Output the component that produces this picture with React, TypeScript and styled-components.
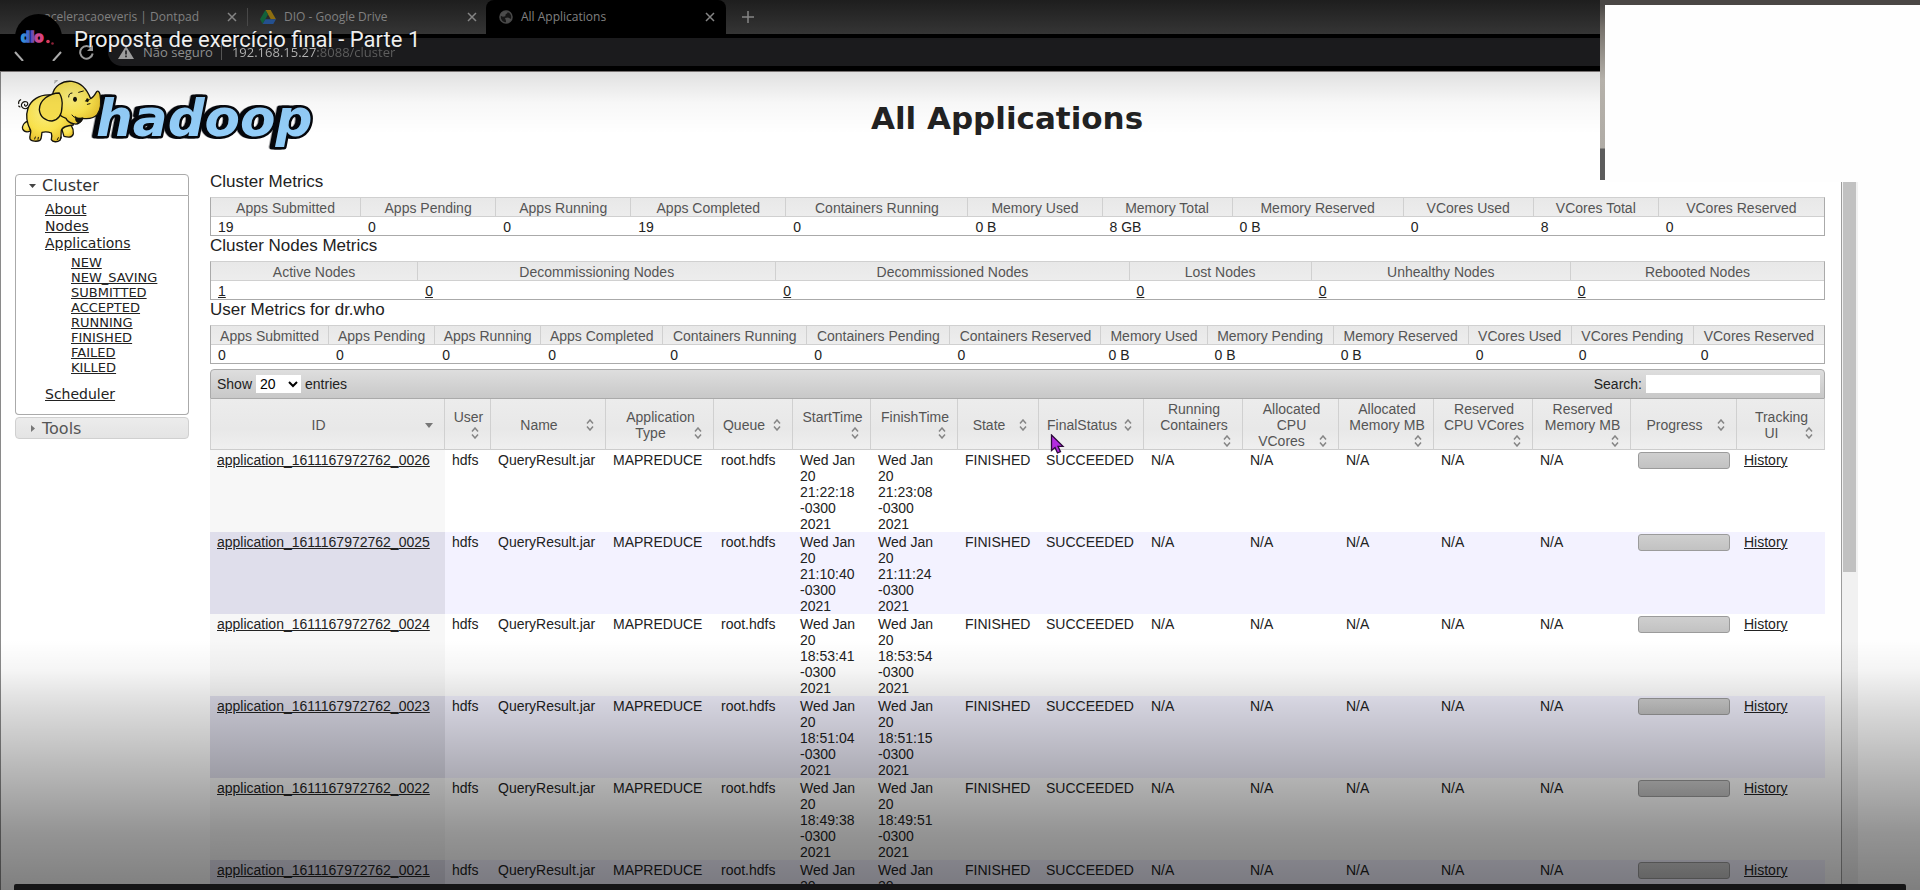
import React from "react";
import styled, { createGlobalStyle } from "styled-components";

const sans = `"Liberation Sans", Arial, sans-serif`;
const wide = `"DejaVu Sans", Verdana, sans-serif`;
const chrome = `"Open Sans", "Segoe UI", sans-serif`;

const GlobalStyle = createGlobalStyle`
  *, *::before, *::after { box-sizing: border-box; }
  body { margin: 0; background: #fff; font-family: ${sans}; color: #222; }
  button, input, select { font: inherit; color: inherit; margin: 0; padding: 0; }
  button { background: none; border: 0; }
  a { color: inherit; }
`;

/* ---------- player ---------- */

const Player = styled.div`
  position: relative;
  display: flex;
  flex-direction: column;
  height: 100vh;
  overflow: hidden;
`;

const TopShade = styled.div`
  position: absolute;
  top: 72px;
  left: 0;
  right: 0;
  height: 62px;
  background: linear-gradient(rgba(0, 0, 0, 0.12), rgba(0, 0, 0, 0.03) 50%, transparent);
  pointer-events: none;
`;

const BottomShade = styled.div`
  position: absolute;
  bottom: 0;
  left: 0;
  right: 0;
  height: 250px;
  background: linear-gradient(
    transparent,
    rgba(0, 0, 0, 0.04) 12%,
    rgba(0, 0, 0, 0.14) 27%,
    rgba(0, 0, 0, 0.27) 50%,
    rgba(0, 0, 0, 0.42) 77%,
    rgba(0, 0, 0, 0.5)
  );
  pointer-events: none;
`;

const SeekEdge = styled.div`
  position: absolute;
  bottom: 0;
  left: 14px;
  right: 14px;
  height: 6px;
  border-radius: 2px 2px 0 0;
  background: #151516;
`;

const VideoHeading = styled.div`
  position: absolute;
  top: 14px;
  left: 15px;
  display: flex;
  align-items: center;
  gap: 12px;
`;

const Avatar = styled.a`
  display: block;
  width: 47px;
  height: 47px;
  border-radius: 50%;
  background: #000;
  overflow: hidden;
`;

const VideoTitle = styled.h2`
  margin: 0;
  padding-top: 4px;
  font: 400 22px/28px Roboto, sans-serif;
  color: #eee;
  text-shadow: 0 0 2px rgba(0, 0, 0, 0.6);
`;

const Webcam = styled.div`
  position: absolute;
  top: 0;
  right: 0;
  width: 320px;
  height: 182px;
  padding: 5px 0 0 5px;
  background: linear-gradient(#4a4745, #4a4745 5px, #77726c 28px, #b5b1aa 80px, #b0aca6 148px, #5c5c5c 149px, #5c5c5c 180px, #fff 180px);
`;

const WebcamFrame = styled.div`
  height: 100%;
  background: #fefefe;
`;

const Pointer = styled.svg`
  position: absolute;
  top: 434px;
  left: 1050px;
`;

/* ---------- browser ---------- */

const TabStrip = styled.nav`
  display: flex;
  height: 34px;
  background: linear-gradient(#1e1e1e, #353535);
  font: 12px/16px ${chrome};
  color: #808080;
`;

const Tab = styled.div<{ $active?: boolean }>`
  display: flex;
  align-items: center;
  gap: 8px;
  width: 238px;
  margin: 8px 0;
  padding: 0 9px 0 12px;
  ${(p) =>
    p.$active &&
    `
    width: 240px;
    margin: 0;
    padding: 0 11px 0 13px;
    border-radius: 8px 8px 0 0;
    background: #000;
  `}
`;

const TabStart = styled(Tab)`
  width: 248px;
  padding: 0 10px 0 44px;
  border-right: 1px solid #484848;
`;

const TabLabel = styled.button`
  flex: 1;
  text-align: left;
  white-space: nowrap;
`;

const TabIconButton = styled.button`
  display: flex;
`;

const NewTab = styled.button`
  display: flex;
  align-items: center;
  padding: 0 16px;
`;

const AddressRow = styled.div`
  display: flex;
  gap: 14px;
  height: 38px;
  padding: 4px 0 5px 13px;
  background: #000;
  border-bottom: 1px solid #777272;
`;

const NavButtons = styled.div`
  display: flex;
  align-items: center;
  gap: 16px;
`;

const AddressBar = styled.div`
  display: flex;
  align-items: center;
  flex: 1;
  gap: 10px;
  padding-left: 10px;
  border-radius: 14px 0 0 14px;
  background: #1b1b1d;
  font: 13px/20px ${chrome};
  color: #8e8e8e;
`;

const Security = styled.button`
  display: flex;
  align-items: center;
  gap: 9px;
  padding-right: 8px;
  border-right: 1px solid #555;
  line-height: 16px;
`;

const UrlInput = styled.input`
  width: 400px;
  border: 0;
  outline: 0;
  background: linear-gradient(90deg, #b4b4b4 86px, #5e5e5e 86px);
  background-clip: text;
  -webkit-background-clip: text;
  -webkit-text-fill-color: transparent;
`;

const Viewport = styled.div`
  display: flex;
  flex: 1;
  min-height: 0;
`;

const Page = styled.div`
  flex: 1;
  min-width: 0;
  padding: 0 16px 0 14px;
  border-left: 1px solid #8a8a8a;
  overflow: hidden;
`;

const ScrollTrack = styled.div`
  width: 17px;
  padding: 0 2px 0 1px;
  border-left: 1px solid #9c9c9c;
  background: #f1f1f1;
`;

const ScrollThumb = styled.div`
  height: 500px;
  background: #c1c1c1;
`;

const Gutter = styled.div`
  width: 62px;
  background: #fefefe;
`;

/* ---------- page ---------- */

const PageHeader = styled.header`
  display: grid;
  grid-template-columns: 302px 1fr 128px;
  height: 101px;
  padding-top: 4px;
`;

const Title = styled.h1`
  margin: 0;
  padding-top: 22px;
  text-align: center;
  font: bold 31px/40px ${wide};
`;

const Columns = styled.div`
  display: grid;
  grid-template-columns: 174px minmax(0, 1fr);
  gap: 21px;
`;

const Sidebar = styled.nav`
  padding-top: 1px;
  font-family: ${wide};
`;

const MenuHeader = styled.button<{ $open?: boolean }>`
  display: flex;
  align-items: center;
  gap: 6px;
  width: 100%;
  height: 22px;
  padding: 1px 0 0 13px;
  border: 1px solid ${(p) => (p.$open ? "#aaa" : "#d0d0d0")};
  border-radius: ${(p) => (p.$open ? "4px 4px 0 0" : "4px")};
  background: ${(p) => (p.$open ? "#fff" : "linear-gradient(#ececec, #e4e4e4)")};
  color: ${(p) => (p.$open ? "#333" : "#555")};
  font-size: 16px;
  line-height: 20px;
`;

const MenuBody = styled.div`
  height: 219px;
  margin-bottom: 2px;
  padding: 5px 0 0 29px;
  border: 1px solid #aaa;
  border-top: 0;
  border-radius: 0 0 4px 4px;
`;

const MenuList = styled.ul`
  margin: 0;
  padding: 0;
  list-style: none;
  font-size: 14px;
  line-height: 17px;
`;

const StateList = styled.ul`
  margin: 0 0 11px;
  padding: 3px 0 0 26px;
  list-style: none;
  font-size: 13px;
  line-height: 15px;
`;

const SectionTitle = styled.h3`
  margin: 0;
  padding-bottom: 6px;
  font-size: 17px;
  font-weight: 400;
  line-height: 18px;
`;

const Col = styled.col<{ $w: number }>`
  width: ${(p) => p.$w}px;
`;

const MetricsTable = styled.table`
  width: 100%;
  margin-bottom: 1px;
  table-layout: fixed;
  border-collapse: separate;
  border-spacing: 0;
  border: 1px solid #aaa;
  border-top-color: #d0d0d0;
  font-size: 14px;
  line-height: 18px;
  white-space: nowrap;

  th {
    height: 19px;
    padding: 2px 0 0;
    border-right: 1px solid #d0d0d0;
    border-bottom: 1px solid #d0d0d0;
    background: linear-gradient(#e8e8e8, #ededed);
    color: #555;
    font-weight: 400;
    line-height: 16px;
  }
  th:last-child { border-right: 0; }
  td { height: 18px; padding: 2px 7px 0; line-height: 16px; }
`;

const Toolbar = styled.div`
  display: flex;
  align-items: center;
  justify-content: space-between;
  height: 30px;
  margin-top: 5px;
  padding: 0 4px 0 6px;
  border: 1px solid #aaa;
  border-radius: 4px 4px 0 0;
  background: linear-gradient(#dedede, #c8c8c8);
  font-size: 14px;
`;

const Field = styled.label`
  display: flex;
  align-items: center;
  gap: 4px;
`;

const PageSize = styled.select`
  width: 45px;
  height: 18px;
  border: 0;
  border-radius: 0;
  background: #fff;
  color: #000;
`;

const SearchInput = styled.input`
  width: 174px;
  height: 18px;
  border: 0;
  background: #fff;
`;

const AppsTable = styled.table`
  width: 100%;
  table-layout: fixed;
  border-collapse: separate;
  border-spacing: 0;
  font-size: 14px;
  line-height: 16px;

  th {
    height: 51px;
    padding: 2px 0 0;
    border-right: 1px solid #d0d0d0;
    border-bottom: 1px solid #ccc;
    background: linear-gradient(#ececec, #e8e8e8 60%, #efefef);
    color: #555;
    font-weight: 400;
  }
  th:first-child { border-left: 1px solid #d0d0d0; }
  td { height: 82px; padding: 2px 7px 0; vertical-align: top; }
`;

const SortButton = styled.button`
  display: block;
  width: 100%;
  padding: 0 5px 0 7px;
  white-space: nowrap;
  text-align: center;
`;

const SortMark = styled.span`
  display: flex;
  float: right;
  align-items: center;
  justify-content: center;
  width: 20px;
  height: 16px;
`;

const Row = styled.tr<{ $odd: boolean }>`
  background: ${(p) => (p.$odd ? "#f3f2ff" : "#fff")};

  td:first-child { background: ${(p) => (p.$odd ? "#dfdeeb" : "#f7f7f7")}; }
`;

const Meter = styled.div`
  height: 17px;
  border: 1px solid #9b9b9b;
  border-radius: 3px;
  background: linear-gradient(#cfcfcf, #c2c2c2);
`;

/* ---------- data ---------- */

type Metric = [label: string, value: string, width: number];

const clusterMetrics: Metric[] = [
  ["Apps Submitted", "19", 150],
  ["Apps Pending", "0", 135],
  ["Apps Running", "0", 135],
  ["Apps Completed", "19", 155],
  ["Containers Running", "0", 182],
  ["Memory Used", "0 B", 134],
  ["Memory Total", "8 GB", 130],
  ["Memory Reserved", "0 B", 171],
  ["VCores Used", "0", 130],
  ["VCores Total", "8", 125],
  ["VCores Reserved", "0", 165],
];

const nodeMetrics: Metric[] = [
  ["Active Nodes", "1", 207],
  ["Decommissioning Nodes", "0", 358],
  ["Decommissioned Nodes", "0", 353],
  ["Lost Nodes", "0", 182],
  ["Unhealthy Nodes", "0", 259],
  ["Rebooted Nodes", "0", 253],
];

const userMetrics: Metric[] = [
  ["Apps Submitted", "0", 118],
  ["Apps Pending", "0", 106],
  ["Apps Running", "0", 106],
  ["Apps Completed", "0", 122],
  ["Containers Running", "0", 144],
  ["Containers Pending", "0", 143],
  ["Containers Reserved", "0", 151],
  ["Memory Used", "0 B", 106],
  ["Memory Pending", "0 B", 126],
  ["Memory Reserved", "0 B", 135],
  ["VCores Used", "0", 103],
  ["VCores Pending", "0", 122],
  ["VCores Reserved", "0", 130],
];

const columns: [lines: string[], width: number][] = [
  [["ID"], 235],
  [["User"], 46],
  [["Name"], 115],
  [["Application", "Type"], 108],
  [["Queue"], 79],
  [["StartTime"], 78],
  [["FinishTime"], 87],
  [["State"], 81],
  [["FinalStatus"], 105],
  [["Running", "Containers"], 99],
  [["Allocated", "CPU", "VCores"], 96],
  [["Allocated", "Memory MB"], 95],
  [["Reserved", "CPU VCores"], 99],
  [["Reserved", "Memory MB"], 98],
  [["Progress"], 106],
  [["Tracking", "UI"], 88],
];

const apps = [
  { id: "0026", start: "21:22:18", finish: "21:23:08" },
  { id: "0025", start: "21:10:40", finish: "21:11:24" },
  { id: "0024", start: "18:53:41", finish: "18:53:54" },
  { id: "0023", start: "18:51:04", finish: "18:51:15" },
  { id: "0022", start: "18:49:38", finish: "18:49:51" },
  { id: "0021", start: "18:47:20", finish: "18:47:33" },
];

const states = ["NEW", "NEW_SAVING", "SUBMITTED", "ACCEPTED", "RUNNING", "FINISHED", "FAILED", "KILLED"];

/* ---------- drawings ---------- */

const Close = () => (
  <svg width="10" height="10" viewBox="0 0 10 10" stroke="#858585" strokeWidth="1.5" aria-hidden>
    <path d="M1 1l8 8M9 1l-8 8" />
  </svg>
);

const DriveIcon = () => (
  <svg width="16" height="14" viewBox="0 0 16 14" aria-hidden>
    <path d="M5.4 0h5.2L16 9.2h-5.2z" fill="#8c6d10" />
    <path d="M5.4 0L8 4.6 2.7 14 0 9.2z" fill="#12613a" />
    <path d="M5.4 9.2H16L13.3 14H2.7z" fill="#24508f" />
  </svg>
);

const GlobeIcon = () => (
  <svg width="14" height="14" viewBox="0 0 14 14" aria-hidden>
    <circle cx="7" cy="7" r="6" fill="#161616" stroke="#484848" strokeWidth="1.6" />
    <path d="M3 2.5l4-1.3 2 1.6-2.3 1.4-.4 2-2.4.6L1 5.600zM6 8l3-.6 3.500 1.800-2.500 3-2.800.8-.3-2.500z" fill="#4c4c4c" />
  </svg>
);

const DioLogo = () => (
  <svg width="47" height="47" viewBox="0 0 47 47" aria-label="dio.">
    <defs>
      <linearGradient id="dio" x1="0" x2="1">
        <stop offset="0" stopColor="#2f9fe0" />
        <stop offset="0.45" stopColor="#4c4fc0" />
        <stop offset="0.7" stopColor="#c84a90" />
        <stop offset="1" stopColor="#e0407c" />
      </linearGradient>
    </defs>
    <text x="6" y="28" fontFamily="Liberation Sans, Arial, sans-serif" fontWeight="bold" fontSize="15" fill="url(#dio)" stroke="url(#dio)" strokeWidth="1.500">
      dio
    </text>
    <circle cx="33" cy="27.500" r="1.800" fill="#d83a5c" />
    <circle cx="37.500" cy="29.500" r="1.300" fill="#8e2238" />
  </svg>
);

const Wordmark = styled.text`
  filter: drop-shadow(-10px 0 0 #05070c);
  font: italic bold 155px ${wide};
  fill: #93cdf8;
  stroke: #05070c;
  stroke-width: 15px;
  paint-order: stroke;
`;

const HadoopLogo = () => (
  <svg width="302" height="77" viewBox="45 225 906 231" role="img" aria-label="hadoop" strokeLinejoin="round" strokeLinecap="round">
    <defs>
      <radialGradient id="hide" cx="0.4" cy="0.35" r="0.75">
        <stop offset="0" stopColor="#fdf184" />
        <stop offset="0.55" stopColor="#fbe34d" />
        <stop offset="1" stopColor="#dfb625" />
      </radialGradient>
    </defs>
    <Wordmark x="288" y="406">hadoop</Wordmark>
    <g fill="none" stroke="#15130c" strokeWidth="4">
      <path d="M86 318c-12 12-26 0-20-11 6-10 22-4 16 5-4 6-10 2-8-2M56 308c-1-6 2-10 6-12M60 318l-4-3" strokeWidth="3.500" />
      <path fill="url(#hide)" d="M84 360c-12 4-18 14-16 24 4 8 14 10 24 6z" />
      <path fill="url(#hide)" d="M196 360c14 4 26 20 24 38-2 12-14 12-28 8l-8-26z" />
      <path
        fill="url(#hide)"
        d="M84 322c8-24 34-42 66-40l62 50 8 40c-16 2-32 4-36 16-2 10 2 20-4 30-8 6-22 6-26-2 2-8 2-14 0-20-10-4-20-4-28-2-2 8 0 18-6 24-8 4-26 4-30-4-2-12 4-18 2-26-10-18-16-42-8-66z"
      />
      <path
        fill="url(#hide)"
        d="M158 282c2-26 30-44 58-41 28 4 46 26 56 52 8-4 14-14 18-21 4-5 8 1 10 8 4 22 2 46-8 60-10 12-28 14-44 12-6 12-16 20-28 16-12-2-18-8-22-16-30-10-48-40-40-70z"
      />
      <path fill="#f9e04f" d="M178 276c-30 0-60 22-60 50 2 22 18 34 38 34 22-4 30-24 30-44 2-16-2-30-8-40z" />
      <path d="M206 288c0-8 4-12 10-12M236 274l14-4M256 300l12-4M262 310l8-2" strokeWidth="3" />
      <path d="M163 246l6-5M164 240l8-1" strokeWidth="2" stroke="#777" />
      <ellipse cx="225" cy="295" rx="6" ry="8" fill="#15130c" stroke="none" />
      <ellipse cx="262" cy="298" rx="4" ry="6" fill="#15130c" stroke="none" />
      <path d="M226 348c6 4 14 4 22 2 0 10-6 16-14 15-6-2-8-8-8-17z" fill="#15130c" strokeWidth="2" />
      <path d="M216 342c4 6 8 8 12 7M104 414l2-6M114 415l1-6M172 416l3-6M182 414l2-6" strokeWidth="3" />
    </g>
  </svg>
);

const SortIcon = ({ active }: { active?: boolean }) =>
  active ? (
    <svg width="8" height="5" viewBox="0 0 8 5" aria-hidden>
      <path d="M0 0h8L4 5z" fill="#777" />
    </svg>
  ) : (
    <svg width="8" height="12" viewBox="0 0 8 12" fill="none" stroke="#858585" strokeWidth="1.500" aria-hidden>
      <path d="M1 4.500l3-3.500 3 3.500M1 7.500l3 3.500 3-3.500" />
    </svg>
  );

/* ---------- parts ---------- */

const Metrics = ({ title, items, linked }: { title: string; items: Metric[]; linked?: boolean }) => (
  <section>
    <SectionTitle>{title}</SectionTitle>
    <MetricsTable>
      <colgroup>
        {items.map(([label, , w]) => (
          <Col key={label} $w={w} />
        ))}
      </colgroup>
      <thead>
        <tr>
          {items.map(([label]) => (
            <th key={label} scope="col">{label}</th>
          ))}
        </tr>
      </thead>
      <tbody>
        <tr>
          {items.map(([label, value]) => (
            <td key={label}>{linked ? <a href="#nodes">{value}</a> : value}</td>
          ))}
        </tr>
      </tbody>
    </MetricsTable>
  </section>
);

const Time = ({ at }: { at: string }) => (
  <>
    Wed Jan<br />20<br />{at}<br />-0300<br />2021
  </>
);

const Applications = () => (
  <AppsTable>
    <colgroup>
      {columns.map(([lines, w]) => (
        <Col key={lines.join(" ")} $w={w} />
      ))}
    </colgroup>
    <thead>
      <tr>
        {columns.map(([lines], i) => (
          <th key={lines.join(" ")} scope="col">
            <SortButton type="button">
              {lines.map((line, n) => (
                <React.Fragment key={line}>
                  {n > 0 && <br />}
                  {line}
                </React.Fragment>
              ))}
              <SortMark>
                <SortIcon active={i === 0} />
              </SortMark>
            </SortButton>
          </th>
        ))}
      </tr>
    </thead>
    <tbody>
      {apps.map((app, i) => (
        <Row key={app.id} $odd={i % 2 === 1}>
          <td><a href={`#${app.id}`}>application_1611167972762_{app.id}</a></td>
          <td>hdfs</td>
          <td>QueryResult.jar</td>
          <td>MAPREDUCE</td>
          <td>root.hdfs</td>
          <td><Time at={app.start} /></td>
          <td><Time at={app.finish} /></td>
          <td>FINISHED</td>
          <td>SUCCEEDED</td>
          <td>N/A</td>
          <td>N/A</td>
          <td>N/A</td>
          <td>N/A</td>
          <td>N/A</td>
          <td><Meter role="progressbar" aria-label="Progress" aria-valuenow={100} /></td>
          <td><a href={`#history-${app.id}`}>History</a></td>
        </Row>
      ))}
    </tbody>
  </AppsTable>
);

export default function App() {
  return (
    <Player>
      <GlobalStyle />
      <TabStrip>
        <TabStart>
          <TabLabel>aceleracaoeveris | Dontpad</TabLabel>
          <TabIconButton aria-label="Close tab"><Close /></TabIconButton>
        </TabStart>
        <Tab>
          <DriveIcon />
          <TabLabel>DIO - Google Drive</TabLabel>
          <TabIconButton aria-label="Close tab"><Close /></TabIconButton>
        </Tab>
        <Tab $active>
          <GlobeIcon />
          <TabLabel>All Applications</TabLabel>
          <TabIconButton aria-label="Close tab"><Close /></TabIconButton>
        </Tab>
        <NewTab aria-label="New tab">
          <svg width="12" height="12" viewBox="0 0 12 12" stroke="#858585" strokeWidth="1.500" aria-hidden>
            <path d="M6 0v12M0 6h12" />
          </svg>
        </NewTab>
      </TabStrip>
      <AddressRow>
        <NavButtons>
          <TabIconButton aria-label="Back">
            <svg width="14" height="18" viewBox="0 0 14 18" fill="none" stroke="#aaa" strokeWidth="2" aria-hidden>
              <path d="M10 18L2 9" />
            </svg>
          </TabIconButton>
          <TabIconButton aria-label="Forward">
            <svg width="20" height="18" viewBox="0 0 20 18" fill="none" stroke="#aaa" strokeWidth="2" aria-hidden>
              <path d="M18 9l-8 9" />
            </svg>
          </TabIconButton>
          <TabIconButton aria-label="Reload">
            <svg width="15" height="15" viewBox="0 0 15 15" fill="none" stroke="#999" strokeWidth="2" aria-hidden>
              <path d="M12.500 3.500A6.300 6.300 0 1 0 13.700 8.500" />
              <path d="M14 0v6H8z" fill="#999" stroke="none" />
            </svg>
          </TabIconButton>
        </NavButtons>
        <AddressBar>
          <Security>
            <svg width="16" height="13" viewBox="0 0 16 13" aria-hidden>
              <path d="M8 0l8 13H0z" fill="#9c9c9c" />
              <path d="M8 4.500v4M8 9.500v1.700" stroke="#1b1b1d" strokeWidth="1.600" />
            </svg>
            Não seguro
          </Security>
          <UrlInput aria-label="Address" defaultValue="192.168.15.27:8088/cluster" />
        </AddressBar>
      </AddressRow>
      <Viewport>
        <Page>
          <PageHeader>
            <HadoopLogo />
            <Title>All Applications</Title>
          </PageHeader>
          <Columns>
            <Sidebar>
              <MenuHeader $open>
                <svg width="7" height="4" viewBox="0 0 7 4" aria-hidden><path d="M0 0h7L3.500 4z" fill="#444" /></svg>
                Cluster
              </MenuHeader>
              <MenuBody>
                <MenuList>
                  <li><a href="#about">About</a></li>
                  <li><a href="#nodes">Nodes</a></li>
                  <li>
                    <a href="#apps">Applications</a>
                    <StateList>
                      {states.map((s) => (
                        <li key={s}><a href={`#${s}`}>{s}</a></li>
                      ))}
                    </StateList>
                  </li>
                  <li><a href="#scheduler">Scheduler</a></li>
                </MenuList>
              </MenuBody>
              <MenuHeader>
                <svg width="7" height="7" viewBox="0 0 7 7" aria-hidden><path d="M2 0v7l4-3.500z" fill="#777" /></svg>
                Tools
              </MenuHeader>
            </Sidebar>
            <main>
              <Metrics title="Cluster Metrics" items={clusterMetrics} />
              <Metrics title="Cluster Nodes Metrics" items={nodeMetrics} linked />
              <Metrics title="User Metrics for dr.who" items={userMetrics} />
              <Toolbar>
                <Field>
                  Show
                  <PageSize defaultValue="20">
                    <option>20</option>
                    <option>50</option>
                    <option>100</option>
                  </PageSize>
                  entries
                </Field>
                <Field>
                  Search:
                  <SearchInput type="text" />
                </Field>
              </Toolbar>
              <Applications />
            </main>
          </Columns>
        </Page>
        <ScrollTrack><ScrollThumb /></ScrollTrack>
        <Gutter />
      </Viewport>
      <TopShade />
      <BottomShade />
      <SeekEdge />
      <Pointer width="15" height="20" viewBox="0 0 15 20" aria-hidden>
        <path d="M1.500 1v15.500l3.500-3 2.500 5.500 3-1.300-2.500-5.400h5z" fill="#b32be0" stroke="#2b0a3a" strokeWidth="1.300" />
      </Pointer>
      <VideoHeading>
        <Avatar href="#channel"><DioLogo /></Avatar>
        <VideoTitle>Proposta de exercício final - Parte 1</VideoTitle>
      </VideoHeading>
      <Webcam><WebcamFrame /></Webcam>
    </Player>
  );
}
